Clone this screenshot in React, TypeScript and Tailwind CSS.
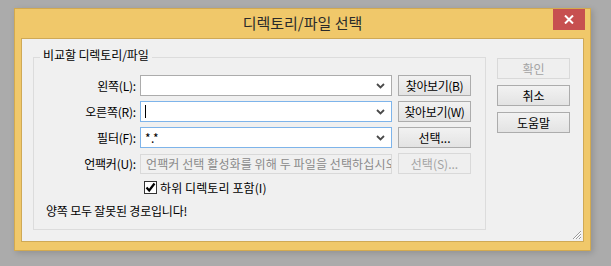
import React from "react";

const font = { fontFamily: '"Noto Sans CJK KR", "Noto Sans", sans-serif' };

function Chevron() {
  return (
    <svg width="9" height="6" viewBox="0 0 9 6" className="shrink-0">
      <path d="M1 1 L4.5 4.5 L8 1" fill="none" stroke="#4a4a4a" strokeWidth="1.8" />
    </svg>
  );
}

function Combo({ value, focused, caret }: { value?: string; focused?: boolean; caret?: boolean }) {
  return (
    <div
      className={`flex items-center h-[21px] w-[252px] bg-white border pl-[4px] pr-[6px] ${
        focused ? "border-[#7eb4ea]" : "border-[#acacac]"
      }`}
    >
      <div className="flex-1 flex items-center text-[12px] text-black leading-none">
        {caret && <span className="inline-block w-px h-[13px] bg-black" />}
        {value && <span className="tracking-[0.5px]">{value}</span>}
      </div>
      <Chevron />
    </div>
  );
}

function Btn({ children, disabled, className = "" }: { children: React.ReactNode; disabled?: boolean; className?: string }) {
  return (
    <div
      className={`flex items-center justify-center h-[21px] w-[73px] border text-[12px] leading-none ${
        disabled
          ? "border-[#d9d9d9] bg-[#efefef] text-[#a3a3a3]"
          : "border-[#acacac] bg-gradient-to-b from-[#f2f2f2] to-[#e3e3e3] text-black"
      } ${className}`}
    >
      {children}
    </div>
  );
}

function Label({ children }: { children: React.ReactNode }) {
  return <div className="w-[106px] pr-[4px] text-right text-[12px] text-black leading-none tracking-[-0.2px]">{children}</div>;
}

export default function App() {
  return (
    <div className="w-[611px] h-[266px] bg-[#ababab] overflow-hidden" style={font}>
      <div className="ml-[14px] pt-[8px]">
        <div className="relative w-[577px] h-[243px] bg-[#f0c86a] border border-[#d2a94f] flex flex-col px-[6px] pb-[8px] shadow-[2px_2px_6px_rgba(0,0,0,0.15)]">
          {/* Title bar */}
          <div className="h-[29px] flex items-center justify-center text-[15px] text-[#2b2b2b]">
            디렉토리/파일 선택
          </div>
          <div className="absolute right-[5px] top-0 w-[32px] h-[21px] bg-[#c75050] flex items-center justify-center">
            <svg width="10" height="9" viewBox="0 0 10 9">
              <path d="M1 0.5 L9 8.5 M9 0.5 L1 8.5" stroke="#fff" strokeWidth="2" />
            </svg>
          </div>

          {/* Content */}
          <div className="relative flex-1 bg-[#f0f0f0] border border-[#cfa956] flex pl-[11px] pt-[18px]">
            {/* Group box */}
            <div className="relative w-[453px] h-[173px] border border-[#dcdcdc] pt-[17px]">
              <div className="absolute left-[6px] top-[-9px] px-[3px] bg-[#f0f0f0] text-[12px] leading-none text-black tracking-[-0.1px]">
                비교할 디렉토리/파일
              </div>
              <div className="flex flex-col gap-[5px]">
                <div className="flex items-center">
                  <Label>왼쪽(L):</Label>
                  <Combo />
                  <Btn className="ml-[6px] tracking-[-0.4px]">찾아보기(B)</Btn>
                </div>
                <div className="flex items-center">
                  <Label>오른쪽(R):</Label>
                  <Combo focused caret />
                  <Btn className="ml-[6px] tracking-[-0.4px]">찾아보기(W)</Btn>
                </div>
                <div className="flex items-center">
                  <Label>필터(F):</Label>
                  <Combo focused value="*.*" />
                  <Btn className="ml-[6px]">선택...</Btn>
                </div>
                <div className="flex items-center">
                  <Label>언팩커(U):</Label>
                  <div className="h-[20px] w-[252px] bg-[#f0f0f0] border border-[#d9d9d9] pl-[5px] flex items-center overflow-hidden whitespace-nowrap text-[12px] leading-none text-[#8a8a8a] tracking-[0.1px]">
                    언팩커 선택 활성화를 위해 두 파일을 선택하십시오
                  </div>
                  <Btn disabled className="ml-[6px]">선택(S)...</Btn>
                </div>
              </div>
              <div className="flex items-center ml-[110px] mt-[7px]">
                <div className="w-[13px] h-[13px] border border-[#333] bg-white flex items-center justify-center">
                  <svg width="11" height="11" viewBox="0 0 11 11">
                    <path d="M1.5 5.5 L4.2 8.5 L9.5 1.5" fill="none" stroke="#000" strokeWidth="2.2" />
                  </svg>
                </div>
                <div className="ml-[3px] text-[12px] leading-none text-black tracking-[0.1px]">하위 디렉토리 포함(I)</div>
              </div>
              <div className="ml-[12px] mt-[11px] text-[12px] leading-none text-black tracking-[-0.2px]">
                양쪽 모두 잘못된 경로입니다!
              </div>
            </div>

            {/* Right buttons */}
            <div className="flex flex-col ml-[11px] mt-[1px] gap-[6px]">
              <Btn disabled>확인</Btn>
              <Btn>취소</Btn>
              <Btn>도움말</Btn>
            </div>

            {/* Resize grip */}
            <svg className="absolute right-[1px] bottom-[1px]" width="11" height="11" viewBox="0 0 11 11">
              <path d="M10 2 L2 10 M10 5 L5 10 M10 8 L8 10" stroke="#9a9a9a" strokeWidth="1" />
              <path d="M10 3 L3 10 M10 6 L6 10 M10 9 L9 10" stroke="#ffffff" strokeWidth="1" />
            </svg>
          </div>
        </div>
      </div>
    </div>
  );
}
